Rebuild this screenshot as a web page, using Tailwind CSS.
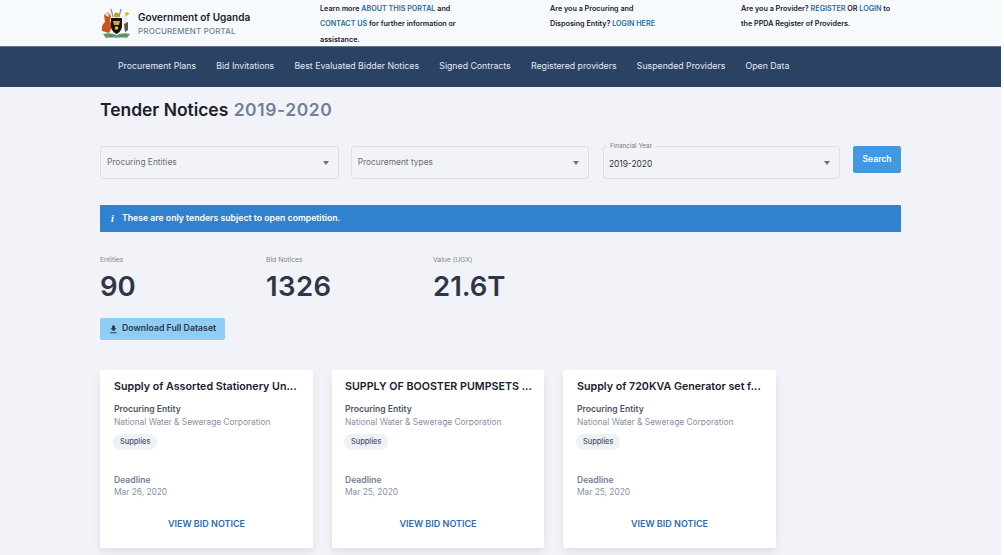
<!DOCTYPE html>
<html>
<head>
<meta charset="utf-8">
<script src="https://cdn.jsdelivr.net/npm/@tailwindcss/browser@4"></script>
</head>
<body class="bg-white font-['Inter','Liberation_Sans',sans-serif] overflow-hidden">
<div class="w-[1001px] h-[555px] overflow-hidden bg-[#f1f3f8]">
  <header class="h-[46px] bg-[#f7fafc] flex">
    <div class="w-[320px] pl-[100px] flex items-center shrink-0">
      <svg class="w-[33px] h-[33px] shrink-0" viewBox="0 0 33 33">
        <path d="M2 24 Q1 18 5 15 L4 8 L8 5 L11 9 L10 13 L12 20 L9 26 Z" fill="#c8551e"/>
        <path d="M5 8 L8 5 L9 10 Z" fill="#f2e8dc"/>
        <path d="M24 8 Q27 3 29 7 L27 10 L28 20 Q29 25 25 26 L23 18 Z" fill="#e8e8e8"/>
        <path d="M25 6 L28 5 L29 7 L26 9 Z" fill="#e0b030"/>
        <path d="M24 17 L28 15 L28 23 L25 25 Z" fill="#555"/>
        <path d="M11 2 L13 10 M21 2 L19 10" stroke="#8a8f98" stroke-width="1.2"/>
        <path d="M11 11 L22 11 L22 20 Q21 25 16.5 27 Q12 25 11 20 Z" fill="#15130f"/>
        <circle cx="16.5" cy="8" r="2.6" fill="#c9a227"/>
        <path d="M13 14 L20 14 L19 18 L14 18 Z" fill="#d9a92a"/>
        <circle cx="16.5" cy="21" r="1.8" fill="#e3c04a"/>
        <path d="M3 27 Q10 25 16.5 28 Q23 25 30 27 L27 31 Q16.5 29 6 31 Z" fill="#5d9a55"/>
        <path d="M9 28 Q16.5 31 24 28 L23 30 Q16.5 32 10 30 Z" fill="#3f7fc0"/>
        <path d="M6 31 Q16.5 29 27 31" stroke="#e4c24a" stroke-width="1" fill="none"/>
      </svg>
      <div class="ml-[5px] mt-[2px] flex flex-col">
        <span class="text-[10px] leading-[14px] font-semibold text-[#1a202c] whitespace-nowrap">Government of Uganda</span>
        <span class="text-[7.95px] leading-[14px] font-medium text-[#718096] tracking-[0.2px] whitespace-nowrap">PROCUREMENT PORTAL</span>
      </div>
    </div>
    <div class="w-[230px] shrink-0 text-[7.2px] leading-[15.5px] font-semibold text-[#1a202c] pt-[0.5px]">
      <p>Learn more <a class="text-[#2b6c9b]">ABOUT THIS PORTAL</a> and</p>
      <p><a class="text-[#2b6c9b]">CONTACT US</a> for further information or</p>
      <p>assistance.</p>
    </div>
    <div class="w-[191px] shrink-0 text-[7.2px] leading-[15.5px] font-semibold text-[#1a202c] pt-[0.5px]">
      <p>Are you a Procuring and</p>
      <p>Disposing Entity? <a class="text-[#2b6c9b]">LOGIN HERE</a></p>
    </div>
    <div class="text-[7.2px] leading-[15.5px] font-semibold text-[#1a202c] pt-[0.5px] whitespace-nowrap">
      <p>Are you a Provider? <a class="text-[#2b6c9b]">REGISTER</a> OR <a class="text-[#2b6c9b]">LOGIN</a> to</p>
      <p>the PPDA Register of Providers.</p>
    </div>
  </header>
  <nav class="h-[41px] bg-[#2a4365] border-t border-[#5f7690] flex items-center pl-[118px] gap-[20.2px] text-[8.75px] text-[#e2e8f0] whitespace-nowrap">
    <a>Procurement Plans</a><a>Bid Invitations</a><a>Best Evaluated Bidder Notices</a><a>Signed Contracts</a><a>Registered providers</a><a>Suspended Providers</a><a>Open Data</a>
  </nav>
  <main class="w-[801px] ml-[100px]">
    <h1 class="mt-[12px] h-[22px] leading-[22px] text-[17.45px] font-semibold text-[#1a202c] whitespace-nowrap">Tender Notices <span class="ml-[1px] tracking-[0.6px] text-[#718096]">2019-2020</span></h1>
    <div class="mt-[25px] flex items-start h-[34px]">
      <div class="w-[239px] h-[33px] border border-[#dcdfe6] rounded-[3px] flex items-center justify-between pl-[6px] pr-[9px] text-[8.4px] text-[#6b6f76]">
        <span>Procuring Entities</span>
        <span class="w-0 h-0 border-x-[3.5px] border-x-transparent border-t-[4px] border-t-[#6f727a]"></span>
      </div>
      <div class="ml-[12px] w-[239px] h-[33px] border border-[#dcdfe6] rounded-[3px] flex items-center justify-between pl-[6px] pr-[9px] text-[8.4px] text-[#6b6f76]">
        <span>Procurement types</span>
        <span class="w-0 h-0 border-x-[3.5px] border-x-transparent border-t-[4px] border-t-[#6f727a]"></span>
      </div>
      <div class="relative ml-[13.5px] w-[237.5px] h-[33px] border border-[#dcdfe6] rounded-[3px] flex items-center justify-between pl-[5px] pr-[9px] pt-[3px] text-[8.4px] text-[#33363b]">
        <span class="absolute left-[3px] top-[-5px] px-[3px] bg-[#f1f3f8] text-[6.4px] leading-[9px] text-[#77797f]">Financial Year</span>
        <span>2019-2020</span>
        <span class="w-0 h-0 border-x-[3.5px] border-x-transparent border-t-[4px] border-t-[#6f727a] mt-[-3px]"></span>
      </div>
      <button class="ml-[13px] w-[48px] h-[27px] rounded-[2px] bg-[#4299e1] text-white text-[8.6px] font-semibold">Search</button>
    </div>
    <div class="mt-[25px] h-[27px] bg-[#3182ce] rounded-[1px] flex items-center pl-[11px] text-white text-[8.7px] font-semibold">
      <span class="w-[11px] font-['Liberation_Serif',serif] italic text-[10px]">i</span>
      <span>These are only tenders subject to open competition.</span>
    </div>
    <div class="mt-[23px] flex text-[#2d3748]">
      <div class="w-[166px]"><div class="text-[6.8px] leading-[9px] text-[#83868d]">Entities</div><div class="mt-[6px] text-[27.5px] leading-[32px] font-semibold">90</div></div>
      <div class="w-[167px]"><div class="text-[6.8px] leading-[9px] text-[#83868d]">Bid Notices</div><div class="mt-[6px] text-[27.5px] leading-[32px] font-semibold tracking-[0.4px]">1326</div></div>
      <div><div class="text-[6.8px] leading-[9px] text-[#83868d]">Value (UGX)</div><div class="mt-[6px] text-[27.5px] leading-[32px] font-semibold">21.6T</div></div>
    </div>
    <button class="mt-[16px] w-[125px] h-[22px] rounded-[2px] bg-[#90cdf4] flex items-center pl-[8px] text-[8.75px] font-semibold text-[#2d3748] whitespace-nowrap">
      <svg class="w-[11px] h-[11px] mr-[3px]" viewBox="0 0 24 24" fill="#2d3748"><path d="M19 9h-4V3H9v6H5l7 7 7-7zM5 18v2h14v-2H5z"/></svg>
      Download Full Dataset
    </button>
    <div class="mt-[30px] flex gap-[19px]">
      <article class="w-[213px] h-[178px] bg-white rounded-[2px] shadow-[0_4px_8px_rgba(0,0,0,0.08)] px-[14px] pt-[10px]">
        <h2 class="text-[10.7px] leading-[14px] font-semibold text-[#1a202c] whitespace-nowrap">Supply of Assorted Stationery Un...</h2>
        <p class="mt-[9px] text-[8.6px] leading-[12px] font-semibold text-[#4a5568]">Procuring Entity</p>
        <p class="mt-[1px] text-[8.33px] leading-[12px] text-[#8791a3] whitespace-nowrap">National Water &amp; Sewerage Corporation</p>
        <span class="mt-[6px] -ml-[1px] block w-fit h-[16px] leading-[16px] px-[7px] rounded-full bg-[#edf2f7] text-[7.4px] font-medium text-[#4a5568]">Supplies</span>
        <p class="mt-[24px] text-[8.6px] leading-[12px] font-semibold text-[#718096]">Deadline</p>
        <p class="text-[8.33px] leading-[12px] text-[#8791a3]">Mar 26, 2020</p>
        <a class="block mt-[20px] text-center text-[9px] leading-[12px] font-semibold text-[#2b6cb0]">VIEW BID NOTICE</a>
      </article>
      <article class="w-[212px] h-[178px] bg-white rounded-[2px] shadow-[0_4px_8px_rgba(0,0,0,0.08)] px-[13px] pt-[10px]">
        <h2 class="text-[10.7px] leading-[14px] font-semibold text-[#1a202c] whitespace-nowrap">SUPPLY OF BOOSTER PUMPSETS ...</h2>
        <p class="mt-[9px] text-[8.6px] leading-[12px] font-semibold text-[#4a5568]">Procuring Entity</p>
        <p class="mt-[1px] text-[8.33px] leading-[12px] text-[#8791a3] whitespace-nowrap">National Water &amp; Sewerage Corporation</p>
        <span class="mt-[6px] -ml-[1px] block w-fit h-[16px] leading-[16px] px-[7px] rounded-full bg-[#edf2f7] text-[7.4px] font-medium text-[#4a5568]">Supplies</span>
        <p class="mt-[24px] text-[8.6px] leading-[12px] font-semibold text-[#718096]">Deadline</p>
        <p class="text-[8.33px] leading-[12px] text-[#8791a3]">Mar 25, 2020</p>
        <a class="block mt-[20px] text-center text-[9px] leading-[12px] font-semibold text-[#2b6cb0]">VIEW BID NOTICE</a>
      </article>
      <article class="w-[213px] h-[178px] bg-white rounded-[2px] shadow-[0_4px_8px_rgba(0,0,0,0.08)] px-[14px] pt-[10px]">
        <h2 class="text-[10.7px] leading-[14px] font-semibold text-[#1a202c] whitespace-nowrap">Supply of 720KVA Generator set f...</h2>
        <p class="mt-[9px] text-[8.6px] leading-[12px] font-semibold text-[#4a5568]">Procuring Entity</p>
        <p class="mt-[1px] text-[8.33px] leading-[12px] text-[#8791a3] whitespace-nowrap">National Water &amp; Sewerage Corporation</p>
        <span class="mt-[6px] -ml-[1px] block w-fit h-[16px] leading-[16px] px-[7px] rounded-full bg-[#edf2f7] text-[7.4px] font-medium text-[#4a5568]">Supplies</span>
        <p class="mt-[24px] text-[8.6px] leading-[12px] font-semibold text-[#718096]">Deadline</p>
        <p class="text-[8.33px] leading-[12px] text-[#8791a3]">Mar 25, 2020</p>
        <a class="block mt-[20px] text-center text-[9px] leading-[12px] font-semibold text-[#2b6cb0]">VIEW BID NOTICE</a>
      </article>
    </div>
  </main>
</div>
</body>
</html>
